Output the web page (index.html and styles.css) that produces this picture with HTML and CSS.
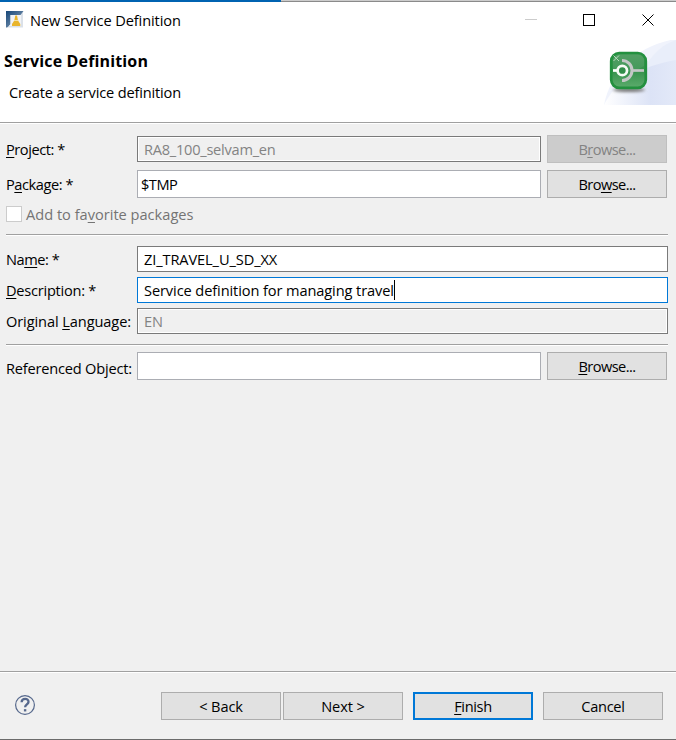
FILE: index.html
```html
<!DOCTYPE html>
<html lang="en">
<head>
<meta charset="utf-8">
<title>New Service Definition</title>
<link rel="stylesheet" href="styles.css">
</head>
<body>
<div class="dialog">
  <div class="topline"><span></span></div>
  <header class="titlebar">
    <svg class="app-icon" width="18" height="18" viewBox="0 0 18 18">
      <defs><linearGradient id="blue" x1="0" y1="0" x2="1" y2="1"><stop offset="0" stop-color="#174779"/><stop offset=".65" stop-color="#6685a5"/><stop offset="1" stop-color="#d5e0eb"/></linearGradient></defs>
      <path d="M1 1H17V16.5H1Z" fill="#dbe1e9"/>
      <path d="M0 0H17.5L14.5 4H4.5V13.5L1 16.5H0Z" fill="url(#blue)"/>
      <path d="M4.5 4H15V15H3L4.5 13Z" fill="#f1f3f6"/>
      <path d="M9.3 4.5H11L12 9.5L14.3 13V15H6V13L8.3 9.5Z" fill="#e9b52c"/>
      <path d="M8 9.5H12.3" stroke="#f6e0a0"/>
    </svg>
    <span class="title">New Service Definition</span>
    <svg class="controls" width="130" height="16" viewBox="0 0 130 16" fill="none" shape-rendering="crispEdges">
      <path d="M0 7.5H12" stroke="#ccc"/>
      <rect x="58.5" y="2.5" width="11" height="11" stroke="#000"/>
      <path d="M117.5 2.5L128.5 13.5M128.5 2.5L117.5 13.5" stroke="#000" shape-rendering="auto"/>
    </svg>
  </header>
  <section class="banner">
    <div><h1>Service Definition</h1><p>Create a service definition</p></div>
    <svg width="76" height="70" viewBox="0 0 76 70">
      <defs>
        <linearGradient id="haze" x1="0" x2="1"><stop offset="0" stop-color="#fff"/><stop offset=".65" stop-color="#dce3f6"/><stop offset="1" stop-color="#e3e9f8"/></linearGradient>
        <linearGradient id="green" x1="0" y1="0" x2="0" y2="1"><stop offset="0" stop-color="#46985a"/><stop offset=".5" stop-color="#36924d"/><stop offset="1" stop-color="#5cab6c"/></linearGradient>
        <filter id="soft" x="-20%" y="-100%" width="140%" height="300%"><feGaussianBlur stdDeviation="1.4"/></filter>
      </defs>
      <path d="M4 65C10 33 37 5 76 -1V65Z" fill="#f0f3fc"/>
      <path d="M45 27C54 12 64 4 76 0V65H45Z" fill="#e9eefa"/>
      <path d="M4 65C15 42 40 26 76 20V65Z" fill="url(#haze)"/>
      <ellipse cx="29" cy="50" rx="16" ry="2" fill="#777" filter="url(#soft)"/>
      <rect x="11.2" y="13.2" width="34.6" height="34.6" rx="8" fill="url(#green)" stroke="#23903f" stroke-width="2.7"/>
      <path d="M13 31Q30 35 44 26V19Q43 14 38 14H19Q13 15 13 20Z" fill="#fff" opacity=".07"/>
      <path d="M22 20.5A10 10 0 0 1 22 40.5" fill="none" stroke="#c3c7c6" stroke-width="3"/>
      <path d="M32.5 30.5H44" stroke="#c3c7c6" stroke-width="2.7"/>
      <path d="M13 30.5H17" stroke="#fff" stroke-width="2.7"/>
      <circle cx="22.3" cy="30.5" r="4.7" fill="#318d49" stroke="#f5fbf5" stroke-width="2.7"/>
      <path d="M13.5 15.5L19 21M19 15.5L13.5 21" stroke="#b9dabf" stroke-width="1"/>
    </svg>
  </section>
  <main>
    <div class="row project"><label><span class="t"><u>P</u>roject: *</span></label><div class="field sunken"><span class="t">RA8_100_selvam_en</span></div><div class="button disabled"><span class="t">B<u>r</u>owse...</span></div></div>
    <div class="row package"><label><span class="t">P<u>a</u>ckage: *</span></label><div class="field light"><span class="t">$TMP</span></div><div class="button"><span class="t">Bro<u>w</u>se...</span></div></div>
    <div class="favorite"><i></i><span class="t">Add to fa<u>v</u>orite packages</span></div>
    <hr>
    <div class="row name"><label><span class="t">Na<u>m</u>e: *</span></label><div class="field"><span class="t">ZI_TRAVEL_U_SD_XX</span></div></div>
    <div class="row desc"><label><span class="t"><u>D</u>escription: *</span></label><div class="field focus"><span class="t">Service definition for managing travel</span><i class="caret"></i></div></div>
    <div class="row lang"><label><span class="t">Original <u>L</u>anguage:</span></label><div class="field sunken"><span class="t">EN</span></div></div>
    <hr>
    <div class="row ref"><label><span class="t">Referenced Object:</span></label><div class="field light"></div><div class="button"><span class="t"><u>B</u>rowse...</span></div></div>
  </main>
  <footer>
    <svg class="help" width="22" height="22" viewBox="0 0 22 22" fill="none" stroke="#56688c"><circle cx="11" cy="11" r="9.4" stroke-width="1.2"/><path d="M7.6 8.3C7.8 3.8 14.7 4 14.5 7.9C14.4 10.3 11.2 10.4 11.1 13.2" stroke-width="2.3"/><path d="M9.9 16.3H12.3" stroke-width="2.3"/></svg>
    <div class="button"><span class="t">&lt; Back</span></div>
    <div class="button next"><span class="t">Next &gt;</span></div>
    <div class="button primary"><span class="t"><u>F</u>inish</span></div>
    <div class="button cancel"><span class="t">Cancel</span></div>
  </footer>
</div>
</body>
</html>
```
FILE: styles.css
```css
* { box-sizing: border-box; }
body { margin: 0; font: 14.6px/20px "Open Sans", sans-serif; letter-spacing: -.1px; color: #000; background: #f0f0f0; }
.dialog { width: 676px; height: 740px; display: flex; flex-direction: column; border-bottom: 1px solid #6b6b6b; overflow: hidden; }
.topline { height: 2px; flex: none; background: #8a8a8a; border-top: 1px solid #ccc; }
.topline span { display: block; width: 281px; height: 2px; margin-top: -1px; background: #0063b1; }
.titlebar { height: 38px; flex: none; background: #fff; display: flex; align-items: flex-start; padding: 8px 0 0 6px; }
.app-icon { margin-top: 1px; }
.title { margin-left: 6px; flex: 1; }
.controls { margin: 2px 21px 0 0; flex: none; }
.banner { height: 83px; flex: none; background: #fff; border-bottom: 1px solid #a0a0a0; box-shadow: 0 1px #fff; display: flex; justify-content: space-between; }
h1 { margin: 11px 0 0 4px; font-size: 16px; line-height: 20px; font-weight: 700; letter-spacing: .15px; }
p { margin: 11px 0 0 9px; letter-spacing: -.17px; }
main { padding: 11px 8px 0 6px; flex: 1; }
.row { display: flex; align-items: center; }
label { width: 131px; flex: none; white-space: nowrap; }
.t { white-space: pre; padding-bottom: 1px; }
label .t { display: inline-block; }
u { text-decoration-thickness: 1px; text-underline-offset: 2px; text-decoration-skip-ink: none; }
.field { flex: 1; height: 26px; border: 1px solid #7a7a7a; background: #fff; padding-left: 6px; display: flex; align-items: center; }
.field.light { height: 28px; border-color: #abadb3; }
.sunken { background: #f0f0f0; color: #838383; box-shadow: inset 0 0 0 1px #fff; }
.package .field { padding-left: 3px; letter-spacing: -.5px; }
.focus { border-color: #0078d7; }
.caret { width: 1px; height: 20px; background: #000; }
.button { width: 120px; height: 28px; flex: none; border: 1px solid #adadad; background: #e1e1e1; display: flex; align-items: center; justify-content: center; }
.row .button { margin: 0 1px 0 6px; letter-spacing: -.55px; }
.disabled { background: #ccc; border-color: #bfbfbf; color: #838383; }
.project { height: 28px; margin-top: 1px; }
.project .field { letter-spacing: -.25px; }
.project label, .package label, .name label { letter-spacing: -.45px; }
.desc label { letter-spacing: -.25px; }
.package { margin-top: 7px; }
.favorite { height: 16px; margin: 8px 0 12px; display: flex; align-items: center; color: #747474; letter-spacing: 0; }
.favorite i { width: 16px; height: 16px; border: 1px solid #ccc; background: #fff; margin-right: 4px; }
hr { height: 2px; border: 0; border-top: 1px solid #a0a0a0; background: #fff; margin: 0; }
.name { margin-top: 10px; }
.desc, .lang { margin-top: 5px; }
.lang { margin-bottom: 10px; }
.ref { margin-top: 6px; }
.ref label { padding-top: 4px; letter-spacing: -.2px; }
footer { height: 68px; flex: none; border-top: 1px solid #a0a0a0; box-shadow: inset 0 1px #fff; display: flex; align-items: flex-start; padding: 20px 13px 0 14px; }
.help { margin: 2px 125px 0 0; flex: none; }
.next { margin-left: 2px; }
.primary { margin-left: 10px; border: 2px solid #0078d7; letter-spacing: -.35px; }
.cancel { margin-left: 10px; letter-spacing: -.3px; }
```
